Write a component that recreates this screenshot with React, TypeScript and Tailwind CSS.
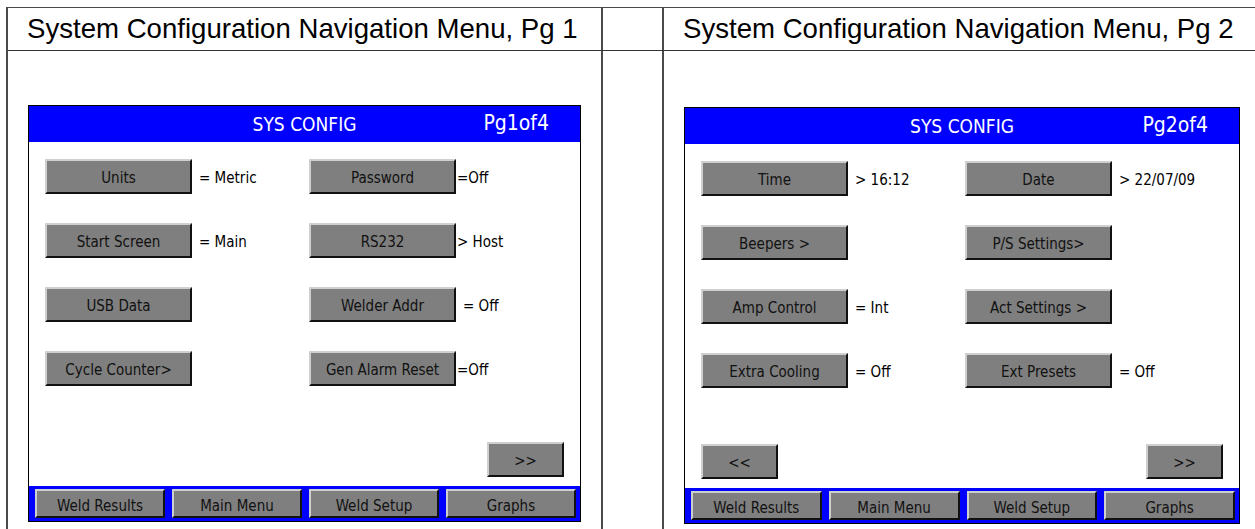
import React from "react";

const tahoma = { fontFamily: '"DejaVu Sans Condensed", "DejaVu Sans", sans-serif' };

function Btn({ label, w, h = 35 }: { label: string; w: number; h?: number }) {
  return (
    <div
      className="flex items-center justify-center bg-[#7f7f7f] border-2 border-t-[#cfcfcf] border-l-[#cfcfcf] border-r-[#111] border-b-[#111] text-[15px] text-[#111] leading-none pt-[3px]"
      style={{ width: w, height: h }}
    >
      {label}
    </div>
  );
}

type Row = { a: string; av: string; avGap: number; b: string; bv: string; bvGap: number };

function Panel({ page, rows, showPrev, width }: { page: number; rows: Row[]; showPrev: boolean; width: number }) {
  return (
    <div className="flex flex-col h-[417px] border border-black bg-white" style={{ ...tahoma, width }}>
      <div className="relative h-[36px] bg-[#0000ff] flex items-center justify-center text-white text-[19px]">
        <span>SYS CONFIG</span>
        <span className="absolute right-[31px] top-1/2 -translate-y-1/2 text-[21px]">{`Pg${page}of4`}</span>
      </div>
      <div className="flex-1 flex flex-col pl-[16px] pr-[16px] pt-[17px]">
        <div className="flex flex-col gap-[29px]">
          {rows.map((r) => (
            <div key={r.a} className="flex items-center h-[35px]">
              <div className="flex items-center w-[264px]">
                <Btn label={r.a} w={147} />
                <span className="text-[15px] text-black pt-[3px]" style={{ marginLeft: r.avGap }}>{r.av}</span>
              </div>
              <div className="flex items-center">
                <Btn label={r.b} w={147} />
                <span className="text-[15px] text-black pt-[3px]" style={{ marginLeft: r.bvGap }}>{r.bv}</span>
              </div>
            </div>
          ))}
        </div>
        <div className="flex-1" />
        <div className={`flex items-center mb-[9px] ${showPrev ? "justify-between" : "justify-end"}`}>
          {showPrev && <Btn label="<<" w={77} />}
          <Btn label=">>" w={77} />
        </div>
      </div>
      <div className="h-[35px] bg-[#0000ff] grid grid-cols-4 gap-[7px] pl-[6px] pr-[4px] py-[3px]">
        {["Weld Results", "Main Menu", "Weld Setup", "Graphs"].map((l) => (
          <div
            key={l}
            className="flex items-center justify-center bg-[#7f7f7f] border-2 border-t-[#cfcfcf] border-l-[#cfcfcf] border-r-[#111] border-b-[#111] text-[15px] text-[#111] leading-none pt-[5px]"
          >
            {l}
          </div>
        ))}
      </div>
    </div>
  );
}

const rows1: Row[] = [
  { a: "Units", av: "= Metric", avGap: 7, b: "Password", bv: "=Off", bvGap: 1 },
  { a: "Start Screen", av: "= Main", avGap: 7, b: "RS232", bv: "> Host", bvGap: 1 },
  { a: "USB Data", av: "", avGap: 7, b: "Welder Addr", bv: "= Off", bvGap: 7 },
  { a: "Cycle Counter>", av: "", avGap: 7, b: "Gen Alarm Reset", bv: "=Off", bvGap: 1 },
];

const rows2: Row[] = [
  { a: "Time", av: "> 16:12", avGap: 7, b: "Date", bv: "> 22/07/09", bvGap: 7 },
  { a: "Beepers >", av: "", avGap: 7, b: "P/S Settings>", bv: "", bvGap: 7 },
  { a: "Amp Control", av: "= Int", avGap: 7, b: "Act Settings >", bv: "", bvGap: 7 },
  { a: "Extra Cooling", av: "= Off", avGap: 7, b: "Ext Presets", bv: "= Off", bvGap: 7 },
];

const arial = { fontFamily: '"Liberation Sans", Arial, sans-serif' };

export default function App() {
  return (
    <div className="w-[1255px] h-[529px] overflow-hidden bg-white">
      <div className="ml-[6px] mt-[7px] w-[1253px] border-t border-l-2 border-[#4a4a4a] flex flex-col">
        <div className="flex h-[43px] border-b border-[#333]">
          <div className="w-[595px] flex items-center pl-[19px] text-[27.6px] text-black border-r-2 border-[#4a4a4a] whitespace-nowrap" style={arial}>
            System Configuration Navigation Menu, Pg 1
          </div>
          <div className="w-[61px] border-r-2 border-[#4a4a4a]" />
          <div className="flex-1 flex items-center pl-[19px] text-[27.6px] text-black whitespace-nowrap" style={arial}>
            System Configuration Navigation Menu, Pg 2
          </div>
        </div>
        <div className="flex h-[500px]">
          <div className="w-[595px] border-r-2 border-[#4a4a4a] pl-[20px] pt-[54px]">
            <Panel page={1} rows={rows1} showPrev={false} width={553} />
          </div>
          <div className="w-[61px] border-r-2 border-[#4a4a4a]" />
          <div className="flex-1 pl-[20px] pt-[56px]">
            <Panel page={2} rows={rows2} showPrev={true} width={556} />
          </div>
        </div>
      </div>
    </div>
  );
}
